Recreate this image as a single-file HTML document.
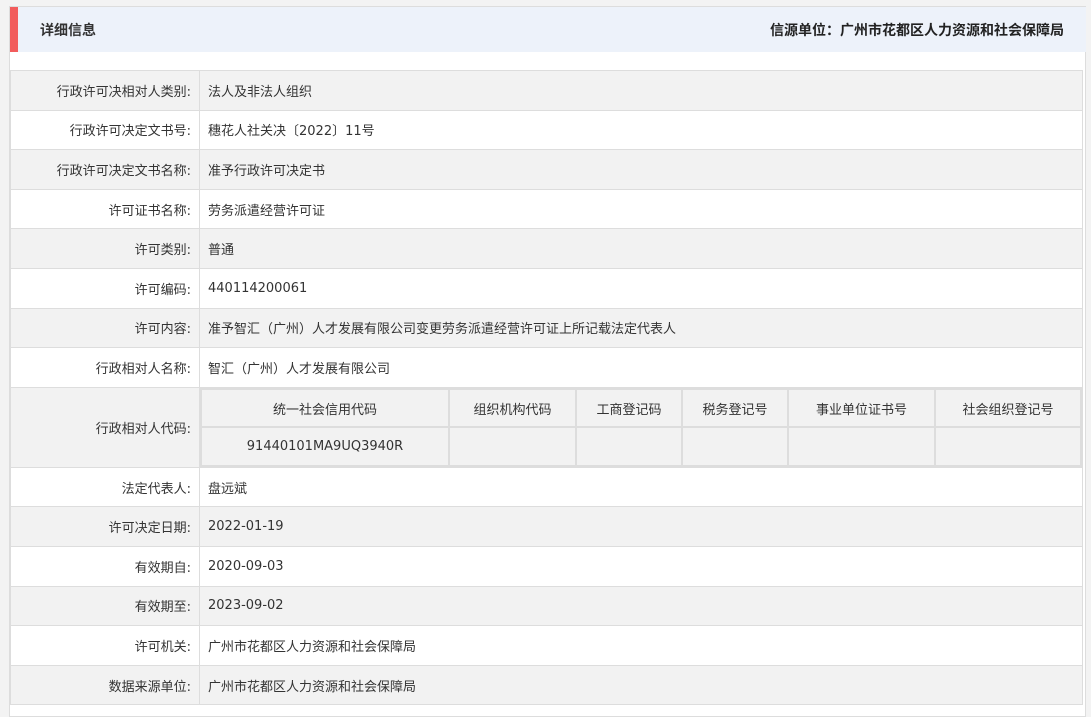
<!DOCTYPE html>
<html><head><meta charset="utf-8"><style>
*{margin:0;padding:0;box-sizing:border-box}
body{width:1091px;height:717px;background:#f3f3f3;font-family:"DejaVu Sans","Noto Sans CJK SC",sans-serif;font-size:13px;color:#333;position:relative;overflow:hidden}
.panel{position:absolute;left:9px;top:6px;width:1077px;height:711px;background:#fff;border:1px solid #ddd}
.hd{position:absolute;left:0;top:0;width:1076px;height:45px;background:#edf2fa;border-left:8px solid #f25c5c}
.hd .l{position:absolute;left:22px;top:13px;font-weight:bold;font-size:14px;color:#333}
.hd .r{position:absolute;right:22px;top:13px;font-weight:bold;font-size:14px;color:#222}
table.m{position:absolute;left:0;top:63px;width:1073px;border-collapse:collapse}
table.m td{border:1px solid #ddd;height:39.6px;padding:0 8px}
table.m td.k{width:190px;text-align:right}
tr.g td{background:#f2f2f2}
table.in{border-collapse:collapse;width:882px;margin:0}
table.in td{border:2px solid #ddd;height:38.5px;text-align:center;background:#f2f2f2;padding:0}
td.ic{padding:0!important}
</style></head><body>
<div class="panel">
<div class="hd"><span class="l">详细信息</span><span class="r">信源单位：广州市花都区人力资源和社会保障局</span></div>
<table class="m">
<tr class="g"><td class="k">行政许可决相对人类别:</td><td>法人及非法人组织</td></tr>
<tr><td class="k">行政许可决定文书号:</td><td>穗花人社关决〔2022〕11号</td></tr>
<tr class="g"><td class="k">行政许可决定文书名称:</td><td>准予行政许可决定书</td></tr>
<tr><td class="k">许可证书名称:</td><td>劳务派遣经营许可证</td></tr>
<tr class="g"><td class="k">许可类别:</td><td>普通</td></tr>
<tr><td class="k">许可编码:</td><td>440114200061</td></tr>
<tr class="g"><td class="k">许可内容:</td><td>准予智汇（广州）人才发展有限公司变更劳务派遣经营许可证上所记载法定代表人</td></tr>
<tr><td class="k">行政相对人名称:</td><td>智汇（广州）人才发展有限公司</td></tr>
<tr class="g"><td class="k">行政相对人代码:</td><td class="ic">
<table class="in">
<tr><td style="width:248px">统一社会信用代码</td><td style="width:127px">组织机构代码</td><td style="width:106px">工商登记码</td><td style="width:106px">税务登记号</td><td style="width:147px">事业单位证书号</td><td>社会组织登记号</td></tr>
<tr><td>91440101MA9UQ3940R</td><td></td><td></td><td></td><td></td><td></td></tr>
</table></td></tr>
<tr><td class="k">法定代表人:</td><td>盘远斌</td></tr>
<tr class="g"><td class="k">许可决定日期:</td><td>2022-01-19</td></tr>
<tr><td class="k">有效期自:</td><td>2020-09-03</td></tr>
<tr class="g"><td class="k">有效期至:</td><td>2023-09-02</td></tr>
<tr><td class="k">许可机关:</td><td>广州市花都区人力资源和社会保障局</td></tr>
<tr class="g"><td class="k">数据来源单位:</td><td>广州市花都区人力资源和社会保障局</td></tr>
</table>
</div>
</body></html>
